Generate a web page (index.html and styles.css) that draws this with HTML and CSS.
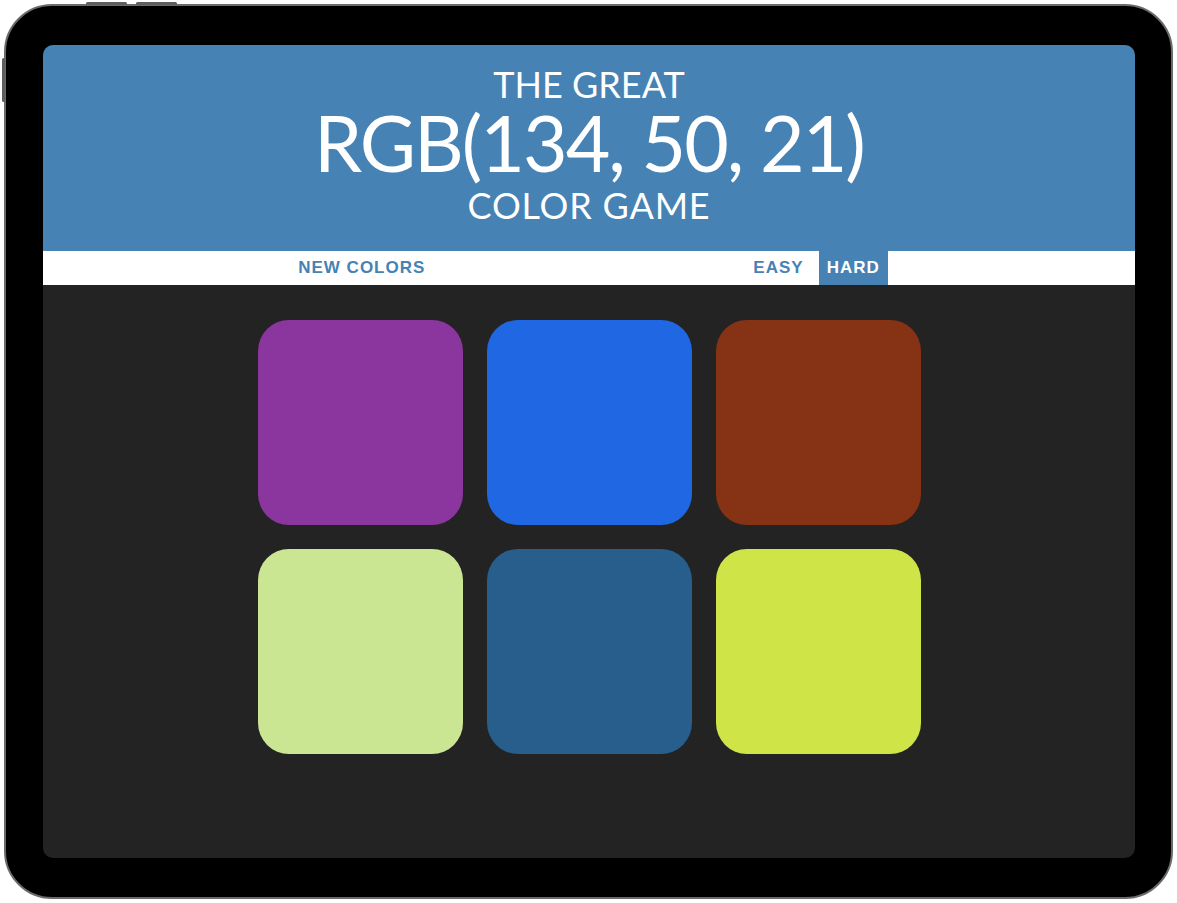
FILE: index.html
```html
<!DOCTYPE html>
<html lang="en">
<head>
<meta charset="utf-8">
<title>The Great RGB Color Game</title>
<link rel="stylesheet" href="styles.css">
</head>
<body>
  <div class="device">
    <span class="hw-btn hw-top hw-top-1"></span>
    <span class="hw-btn hw-top hw-top-2"></span>
    <span class="hw-btn hw-side"></span>
    <div class="screen">
      <header class="title">
        <span class="title-line title-small">The Great</span>
        <span class="title-line title-big">RGB(134, 50, 21)</span>
        <span class="title-line title-small title-last">Color Game</span>
      </header>
      <nav class="stripe">
        <button class="btn">New Colors</button>
        <span class="message"></span>
        <button class="btn">Easy</button>
        <button class="btn selected">Hard</button>
      </nav>
      <main class="board">
        <div class="square sq-purple"></div>
        <div class="square sq-blue"></div>
        <div class="square sq-rust"></div>
        <div class="square sq-mint"></div>
        <div class="square sq-navy"></div>
        <div class="square sq-lime"></div>
      </main>
    </div>
  </div>
</body>
</html>
```

FILE: styles.css
```css
html, body {
  margin: 0;
  padding: 0;
  background: #ffffff;
}

body {
  width: 1177px;
  height: 903px;
  overflow: hidden;
  font-family: "Lato", "Liberation Sans", sans-serif;
}

.device {
  position: relative;
  box-sizing: border-box;
  width: 1169px;
  height: 895px;
  margin: 4px 0 0 4px;
  padding: 39px 0 0 37px;
  background: #000000;
  border: 2px solid #6b6b6b;
  border-radius: 48px;
}

.hw-btn {
  position: absolute;
  background: #5e5e5e;
  border-radius: 2px;
}

.hw-top {
  top: -4px;
  height: 3px;
  width: 41px;
}

.hw-top-1 { left: 80px; }
.hw-top-2 { left: 130px; }

.hw-side {
  left: -4px;
  top: 52px;
  width: 3px;
  height: 44px;
}

.screen {
  width: 1092px;
  height: 813px;
  background: #232323;
  border-radius: 10px;
  overflow: hidden;
}

.title {
  display: flex;
  flex-direction: column;
  align-items: center;
  background: #4682b4;
  color: #ffffff;
  text-transform: uppercase;
  padding: 20px 0 27px;
  margin: 0;
}

.title-line {
  display: block;
  font-weight: 400;
  white-space: nowrap;
}

.title-small {
  font-size: 36px;
  line-height: 38px;
}

.title-big {
  font-size: 77px;
  line-height: 78px;
  letter-spacing: -2px;
}

.title-last {
  margin-top: 5px;
  letter-spacing: 0.8px;
}

.stripe {
  display: flex;
  justify-content: center;
  align-items: stretch;
  height: 34px;
  background: #ffffff;
}

.btn {
  border: none;
  background: none;
  margin: 0;
  padding: 0 8px;
  font-family: "Liberation Sans", Arial, sans-serif;
  font-size: 17px;
  font-weight: 700;
  letter-spacing: 1px;
  text-transform: uppercase;
  color: #4682b4;
  cursor: pointer;
}

.btn.selected {
  background: #4682b4;
  color: #ffffff;
  margin-left: 7px;
}

.message {
  display: block;
  width: 312px;
}

.board {
  display: grid;
  grid-template-columns: repeat(3, 205px);
  grid-auto-rows: 205px;
  gap: 24px;
  justify-content: center;
  margin-top: 35px;
}

.square {
  border-radius: 31px;
}

.sq-purple { background: #8b359e; }
.sq-blue   { background: #2067e3; }
.sq-rust   { background: #863215; }
.sq-mint   { background: #cbe692; }
.sq-navy   { background: #285e8c; }
.sq-lime   { background: #cfe547; }
```
